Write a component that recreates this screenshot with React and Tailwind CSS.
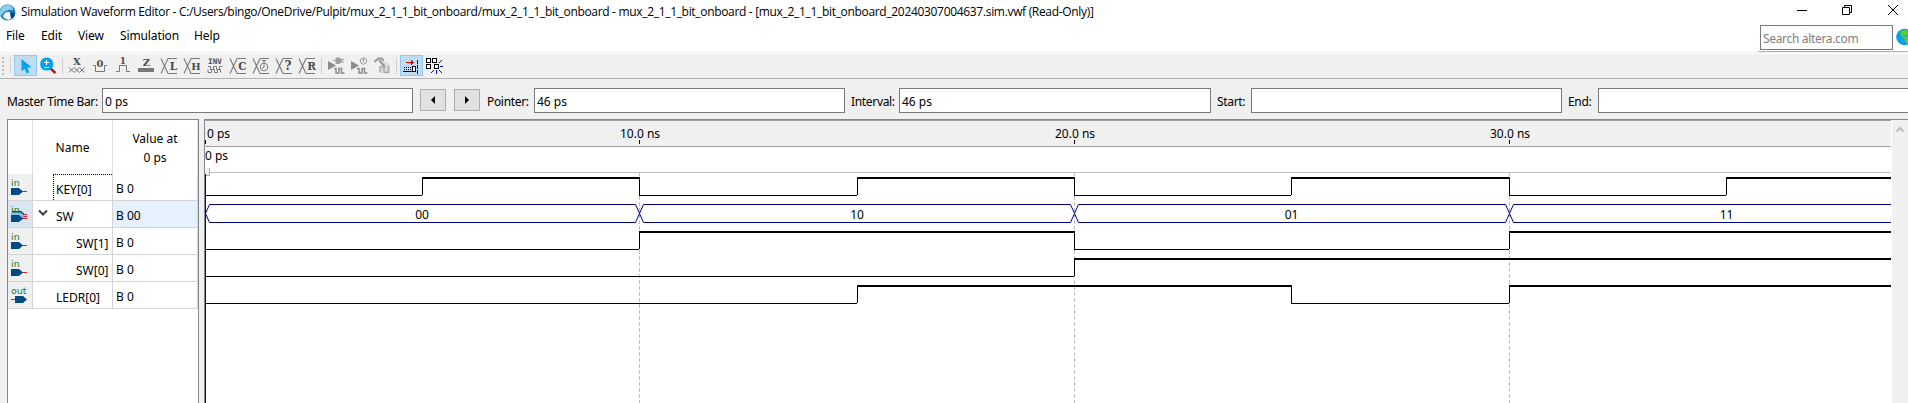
// Edge positions of the simulated half periods, in ruler pixels.
const T = [0, 217, 434, 652, 869, 1086, 1304, 1521, 1686];

function Wave({ bits, y }) {
  const out = [];
  let start = 0;
  for (let i = 1; i <= 8; i++) {
    if (i === 8 || bits[i] !== bits[start]) {
      const x = T[start];
      const w = T[i] - x;
      out.push(
        bits[start] === "1" ? (
          <rect key={i} x={x} y={y} width={i < 8 ? w + 1 : w} height="2" />
        ) : (
          <rect key={i} x={x} y={y + 18} width={w} height="1" />
        )
      );
      if (i < 8) out.push(<rect key={"e" + i} x={T[i]} y={y} width="1" height={bits[start] === "1" ? 19 : 18} />);
      start = i;
    }
  }
  return <g fill="#000">{out}</g>;
}

function Bus() {
  const c = [0.5, 434.5, 869.5, 1304.5];
  return (
    <g fill="none" stroke="#00007f">
      {c.map((x, i) => {
        const e = i < 3 ? c[i + 1] : 1690;
        return <path key={x} d={`M${e - 4} 31.5H${x + 4}L${x} 40.5L${x + 4} 49.5H${e - 4}`} />;
      })}
      {c.slice(1).map((x) => (
        <path key={x} d={`M${x - 4} 31.5L${x} 40.5L${x - 4} 49.5`} />
      ))}
    </g>
  );
}

function Pin({ kind }) {
  const out = kind === "out";
  return (
    <svg width="18" height="22" viewBox="0 0 18 22" className="block shrink-0">
      <text x="0" y="8.2" fontSize="9.5" fontFamily="DejaVu Sans, sans-serif" fill="#1a7a1a">
        {out ? "out" : "in"}
      </text>
      {kind === "bus" && (
        <>
          <path d="M0 8H10L14 12L12 15H0Z" fill="#7cc4ee" />
          <path d="M1 6.8H10L13.500 10" stroke="#004b84" strokeWidth="1.6" fill="none" />
          <path d="M12.500 9.500H16M12.500 11.500H16M11 13.500H16" stroke="#e02020" />
        </>
      )}
      {out ? (
        <>
          <path d="M0 13.500H5" stroke="#e02020" />
          <path d="M4 10H12L16 13.500L12 17H4Z" fill="#004b84" />
        </>
      ) : (
        <>
          <path d="M10 13.500H16" stroke="#e02020" />
          <path d="M0 10H8L12 13.500L8 17H0Z" fill="#004b84" />
        </>
      )}
    </svg>
  );
}

function Row({ kind, name, value, indent, selected, focus, open }) {
  return (
    <div className="flex h-[27px] shrink-0 border-b border-[#d4d4d4]">
      <div className={`flex w-[25px] items-center border-r border-[#d4d4d4] pl-[3px] pt-[4px] ${selected ? "bg-[#d9e6f2]" : "bg-[#f0f0f0]"}`}>
        <Pin kind={kind} />
      </div>
      <div className="flex w-[80px] border-r border-[#d4d4d4]">
        <div className="flex w-[20px] shrink-0 items-center pl-[5px]">
          {open && (
            <svg width="10" height="8" viewBox="0 0 10 8" className="mb-[2px]">
              <path d="M1 1.5L5 5.5L9 1.5" fill="none" stroke="#404040" strokeWidth="2" />
            </svg>
          )}
        </div>
        <div className={`flex flex-1 items-center pt-[4px] leading-none ${indent ? "pl-[22px]" : "pl-[2px]"} ${focus ? "border-l border-t border-dotted border-black" : "border-l border-t border-transparent"}`}>
          {name}
        </div>
      </div>
      <div className={`flex w-[85px] items-center border-r border-[#d4d4d4] pl-[3px] pt-[4px] leading-none ${selected ? "bg-[#e5f1fc]" : ""}`}>{value}</div>
    </div>
  );
}

function Field({ label, value, labelClass, boxClass }) {
  return (
    <>
      <div className={`shrink-0 pt-[3px] leading-none tracking-[-0.33px] whitespace-nowrap ${labelClass}`}>{label}</div>
      <div className={`flex h-[25px] shrink-0 items-center border border-[#7a7a7a] bg-white pl-[2px] pt-[3px] leading-none ${boxClass}`}>{value}</div>
    </>
  );
}

function Step({ dir, className }) {
  return (
    <div className={`mb-px flex h-[22px] w-[26px] shrink-0 items-center justify-center border border-[#adadad] bg-[#e1e1e1] ${className}`}>
      <svg width="6" height="8" viewBox="0 0 6 8">
        <path d={dir === "l" ? "M5 0V8L1 4Z" : "M1 0V8L5 4Z"} fill="#000" />
      </svg>
    </div>
  );
}

// Small grey stimulus icons on the toolbar; each is drawn in a box 18px high.
const G = "#787878";
const D = "#4c4c4c";
function Letter({ x, y, size = 10, children }) {
  return (
    <text x={x} y={y} fontSize={size} fontWeight="700" fontFamily="DejaVu Serif, serif" fill={D} textAnchor="middle">
      {children}
    </text>
  );
}
function Tool({ w = 23, children }) {
  return (
    <svg width={w} height="18" viewBox={`0 0 ${w} 18`} className="block shrink-0 overflow-visible">
      {children}
    </svg>
  );
}
function Frame() {
  return (
    <>
      <path d="M0 1.500L7 16.500M0 16.500L7 1.500" stroke={G} strokeWidth="1.1" fill="none" />
      <path d="M7 1.500H16M7 16.500H16" stroke={G} />
    </>
  );
}
function Divider({ x }) {
  return <rect x={x} y="1" width="1" height="16" fill="#cfcfcf" />;
}

function Toolbar() {
  return (
    <div className="flex h-[25px] shrink-0 items-center border-b border-[#b4b4b4] bg-[#f0f0f0]">
      <svg width="14" height="20" viewBox="0 0 14 20" className="shrink-0">
        {[1, 5, 9, 13, 17].map((y) => (
          <rect key={y} x="2" y={y} width="2" height="2" fill="#bdbdbd" />
        ))}
        <Divider x="10" />
      </svg>
      <div className="mb-px flex h-[21px] w-[23px] shrink-0 items-center justify-center border border-[#90c8f6] bg-[#c0dcf3]">
        <svg width="11" height="15" viewBox="0 0 11 15" className="mt-[2px] ml-[2px]">
          <path d="M0.500 0V12.500L3.500 9.800L5.800 14.500L8.300 13.300L6.200 8.800L10.500 8.300Z" fill="#00a2f2" />
        </svg>
      </div>
      <svg width="32" height="18" viewBox="0 0 32 18" className="shrink-0">
        <path d="M13.500 11.500L18.500 16" stroke="#b01818" strokeWidth="2.400" />
        <circle cx="9.700" cy="7" r="6.600" fill="#00a2f2" />
        <path d="M9.500 3V8M7 5.500H12M7 10.500H12" stroke="#fff" strokeWidth="1.200" />
        <Divider x="25" />
      </svg>
      <Tool w={24}>
        <Letter x={8} y={8}>X</Letter>
        <path d="M0 10.500L5 15.500L10.500 10.500L15.500 15.500M0 15.500L5 10.500L10.500 15.500L15.500 10.500" stroke={G} fill="none" />
      </Tool>
      <Tool>
        <Letter x={7} y={10}>0</Letter>
        <path d="M0 8.500H2.500V14.500H11.500V8.500H14" stroke={G} fill="none" />
      </Tool>
      <Tool>
        <Letter x={7} y={7} size={9}>1</Letter>
        <path d="M0 14.500H3.500V8.500H10.500V14.500H14" stroke={G} fill="none" />
      </Tool>
      <Tool w={22}>
        <Letter x={7.5} y={9}>Z</Letter>
        <rect x="-1" y="11" width="16" height="4" fill={G} />
      </Tool>
      <Tool><Frame /><Letter x={12.5} y={12.5} size={10.5}>L</Letter></Tool>
      <Tool><Frame /><Letter x={12} y={12.5}>H</Letter></Tool>
      <Tool>
        <text x="1" y="7" fontSize="7.700" fontWeight="700" fontFamily="DejaVu Sans Mono, monospace" fill={D}>INV</text>
        <path d="M1 9.500H3.500V12.500H6.500V9.500H9.500V12.500H12.500V9.500H15M1 12.500V15.500H4.500V12.500H7.500V15.500H10.500V12.500H13.500V15.500" stroke={G} fill="none" />
      </Tool>
      <Tool><Frame /><Letter x={12.5} y={12.5} size={10.5}>C</Letter></Tool>
      <Tool>
        <Frame />
        <circle cx="11" cy="10" r="3.800" stroke={G} fill="#f0f0f0" />
        <path d="M11 3V6M9 3.500H13M11 7.500V10.500L9 11" stroke={G} fill="none" />
      </Tool>
      <Tool><Frame /><Letter x={12} y={13} size={12}>?</Letter></Tool>
      <Tool w={29}>
        <Frame />
        <Letter x={12.5} y={12.5} size={10.5}>R</Letter>
        <Divider x="22" />
      </Tool>
      <Tool>
        <path d="M0 4L8 8.500L0 13Z" fill="#8c8c8c" />
        <path d="M6 11.500H8V16H11V11.500H13.500V16H16.500" stroke="#8c8c8c" strokeWidth="1.500" fill="none" />
        <path d="M5 3.500H8M8 1H11Q13.500 1.500 13.500 3.500Q13.500 5.500 11 6.500H8ZM12 2.500H16M12 5H16" stroke="#a0a0a0" fill="#a0a0a0" />
      </Tool>
      <Tool>
        <path d="M0 4L8 8.500L0 13Z" fill="#8c8c8c" />
        <path d="M6 11.500H8V16H11V11.500H13.500V16H16.500" stroke="#8c8c8c" strokeWidth="1.500" fill="none" />
        <circle cx="12.500" cy="4" r="3.200" stroke="#a0a0a0" fill="#e4e4e4" />
        <path d="M12.500 2V4.500" stroke="#8c8c8c" />
      </Tool>
      <Tool w={26}>
        <path d="M7 5H13L16 8V16H7Z" fill="#dcdcdc" />
        <path d="M0.500 5L4 1.500H8L9.500 4M5 3L11 10" stroke="#999" strokeWidth="2" fill="none" />
        <path d="M6 15.500V10H10V15.500H14.500V9" stroke="#a8a8a8" strokeWidth="1.400" fill="none" />
        <Divider x="22" />
      </Tool>
      <div className="mb-px flex h-[21px] w-[23px] shrink-0 items-center justify-center border border-[#90c8f6] bg-[#c0dcf3]">
        <svg width="17" height="17" viewBox="0 0 17 17" shapeRendering="crispEdges">
          <path d="M3 5.500H9" stroke="#e00000" />
          <path d="M8 3V8L11 5.500Z" fill="#e00000" />
          <path d="M1 10.500H9M1 12.500H9" stroke="#000" strokeDasharray="1 1" />
          <path d="M0 14.500H13M9.500 9.500H12.500V14H9.500Z" stroke="#000" fill="#fff" />
          <path d="M14.500 3V17" stroke="#0000ff" strokeDasharray="4 1" />
        </svg>
      </div>
      <svg width="20" height="18" viewBox="0 0 20 18" className="ml-[3px] shrink-0" shapeRendering="crispEdges">
        <path d="M0.500 1.500H4.500V5.500H0.500ZM6.500 1.500H10.500V5.500H6.500ZM0.500 7.500H4.500V11.500H0.500ZM8.500 7.500H12.500V11.500H8.500Z" stroke="#000" fill="#fff" />
        <path d="M13 6L16 3M14 9.500H16.500M13 13L16 16M10.500 13V17M8 13L5 16" stroke="#0000ff" />
      </svg>
    </div>
  );
}

function Mark({ children, className }) {
  return <span className={`absolute top-[7px] leading-none whitespace-nowrap ${className}`}>{children}</span>;
}

export default function App() {
  return (
    <div className="flex h-[403px] w-[1908px] flex-col overflow-hidden bg-[#f0f0f0] font-['Noto_Sans',sans-serif] text-[12px] text-black">
      <div className="flex h-[53px] shrink-0 justify-between border-b border-[#f0f0f0] bg-white">
        <div className="flex flex-col">
          <div className="flex h-[24px] items-center">
            <svg width="16" height="20" viewBox="0 0 16 20" className="shrink-0">
              <circle cx="7.500" cy="10.500" r="8" fill="#1b83bd" />
              <path d="M0 13Q-1 4 7 3Q13 3 13 8Q9 7 6 9Q2 11 1 14Z" fill="#8ccdf0" />
              <path d="M3 15Q4 10 8 10Q12 10 13 16Q8 20 3 15Z" fill="#f6fbff" />
              <path d="M10 11Q13 10 15 11Q14 16 11 17Z" fill="#06457c" />
            </svg>
            <div className="pl-[5px] font-['Open_Sans',sans-serif] text-[12px] leading-none tracking-[-0.32px] whitespace-nowrap">
              Simulation Waveform Editor - C:/Users/bingo/OneDrive/Pulpit/mux_2_1_1_bit_onboard/mux_2_1_1_bit_onboard - mux_2_1_1_bit_onboard - [mux_2_1_1_bit_onboard_20240307004637.sim.vwf (Read-Only)]
            </div>
          </div>
          <div className="flex h-[25px] items-center pb-px pl-[6px] leading-none tracking-[-0.12px]">
            <span className="w-[35px]">File</span>
            <span className="w-[37px]">Edit</span>
            <span className="w-[42px]">View</span>
            <span className="w-[74px]">Simulation</span>
            <span>Help</span>
          </div>
        </div>
        <div className="flex w-[150px] flex-col">
          <svg width="150" height="25" viewBox="0 0 150 25" className="shrink-0" fill="none" stroke="#000">
            <path d="M39 10.500H49" />
            <path d="M84.500 7.500H91.500V14.500H84.500ZM86.500 7V5.500H93.500V12.500H92" />
            <path d="M130 5L140 15M140 5L130 15" />
          </svg>
          <div className="flex">
            <div className="ml-[2px] flex h-[25px] w-[133px] shrink-0 items-center border border-[#7a7a7a] pl-[2px] pt-[3px] leading-none tracking-[-0.33px] text-[#808080]">Search altera.com</div>
            <svg width="12" height="20" viewBox="0 0 12 20" className="ml-[3px] mt-[2px] shrink-0">
              <circle cx="8.500" cy="10" r="8.300" fill="#00a2f2" />
              <path d="M5 4L9 2.500L12 4V8L8 9L9 12L7 11L4 7ZM8 10L12 9V17L9 15Z" fill="#5cc92c" />
            </svg>
          </div>
          <div className="mt-[1px] h-px shrink-0 bg-[#b4b4b4]" />
        </div>
      </div>
      <div className="h-px shrink-0 bg-white" />
      <Toolbar />
      <div className="flex h-[40px] shrink-0 items-center pl-[7px] pt-[3px]">
        <Field label="Master Time Bar:" value="0 ps" labelClass="w-[95px]" boxClass="w-[311px]" />
        <Step dir="l" className="ml-[7px]" />
        <Step dir="r" className="ml-[8px]" />
        <Field label="Pointer:" value="46 ps" labelClass="ml-[7px] w-[47px]" boxClass="w-[311px]" />
        <Field label="Interval:" value="46 ps" labelClass="ml-[6px] w-[48px]" boxClass="w-[312px]" />
        <Field label="Start:" value="" labelClass="ml-[6px] w-[34px]" boxClass="w-[311px]" />
        <Field label="End:" value="" labelClass="ml-[6px] w-[30px]" boxClass="w-[330px]" />
      </div>
      <div className="flex min-h-0 flex-1 pl-[7px]">
        <div className="flex w-[192px] shrink-0 flex-col border-x border-t border-[#828790] bg-white">
          <div className="flex h-[54px] shrink-0">
            <div className="w-[25px] border-r border-[#e0e0e0]" />
            <div className="flex w-[80px] items-center justify-center border-r border-[#e0e0e0] pt-[1px]">Name</div>
            <div className="flex w-[85px] items-center justify-center border-r border-[#e0e0e0] pt-[1px] text-center leading-[19px]">Value at<br />0 ps</div>
          </div>
          <Row kind="in" name="KEY[0]" value="B 0" focus />
          <Row kind="bus" name="SW" value="B 00" selected open />
          <Row kind="in" name="SW[1]" value="B 0" indent />
          <Row kind="in" name="SW[0]" value="B 0" indent />
          <Row kind="out" name="LEDR[0]" value="B 0" />
        </div>
        <div className="ml-[5px] flex w-[1704px] shrink-0 border-l border-t border-[#828790]">
          <div className="flex w-[1686px] flex-col bg-white">
            <div className="relative h-[27px] shrink-0 border-b border-t border-[#a0a0a0] bg-[#f0f0f0]">
              <Mark className="left-[2px]">0 ps</Mark>
              <Mark className="left-[415px]">10.0 ns</Mark>
              <Mark className="left-[850px]">20.0 ns</Mark>
              <Mark className="left-[1285px]">30.0 ns</Mark>
              <svg width="1686" height="4" className="absolute left-0 top-[19px]">
                {[0, 434, 869, 1304].map((x) => <rect key={x} x={x} y="0" width="1" height="4" />)}
              </svg>
            </div>
            <div className="h-[26px] shrink-0 border-b border-[#c0c0c0] pt-[3px] leading-none">0 ps</div>
            <svg width="1686" height="230" viewBox="0 0 1686 230" className="block shrink-0 overflow-visible">
              <path d="M0.500 -5H4.500V2.500H0.500Z" fill="#f0f0f0" />
              <path d="M4.500 -5V2.500H0" stroke="#a8a8a8" fill="none" />
              {[434.5, 869.5, 1304.5].map((x) => <path key={x} d={`M${x} -1V230`} stroke="#c0c0c0" strokeDasharray="4 2" />)}
              <Wave bits="01010101" y={4} />
              <Bus />
              <Wave bits="00110011" y={58} />
              <Wave bits="00001111" y={85} />
              <Wave bits="00011011" y={112} />
              <rect x="0" y="1" width="1" height="230" fill="#0000c8" />
              <g fontSize="12" textAnchor="middle">
                <text x="217" y="46">00</text>
                <text x="652" y="46">10</text>
                <text x="1086.500" y="46">01</text>
                <text x="1521.500" y="46">11</text>
              </g>
            </svg>
          </div>
          <div className="flex w-[17px] justify-center border-l border-white bg-[#f0f0f0] pr-[1px] pt-[6px]">
            <svg width="8" height="7" viewBox="0 0 8 7"><path d="M0.500 5.500L4 2L7.500 5.500" stroke="#bcbcbc" strokeWidth="2" fill="none" /></svg>
          </div>
        </div>
      </div>
    </div>
  );
}
